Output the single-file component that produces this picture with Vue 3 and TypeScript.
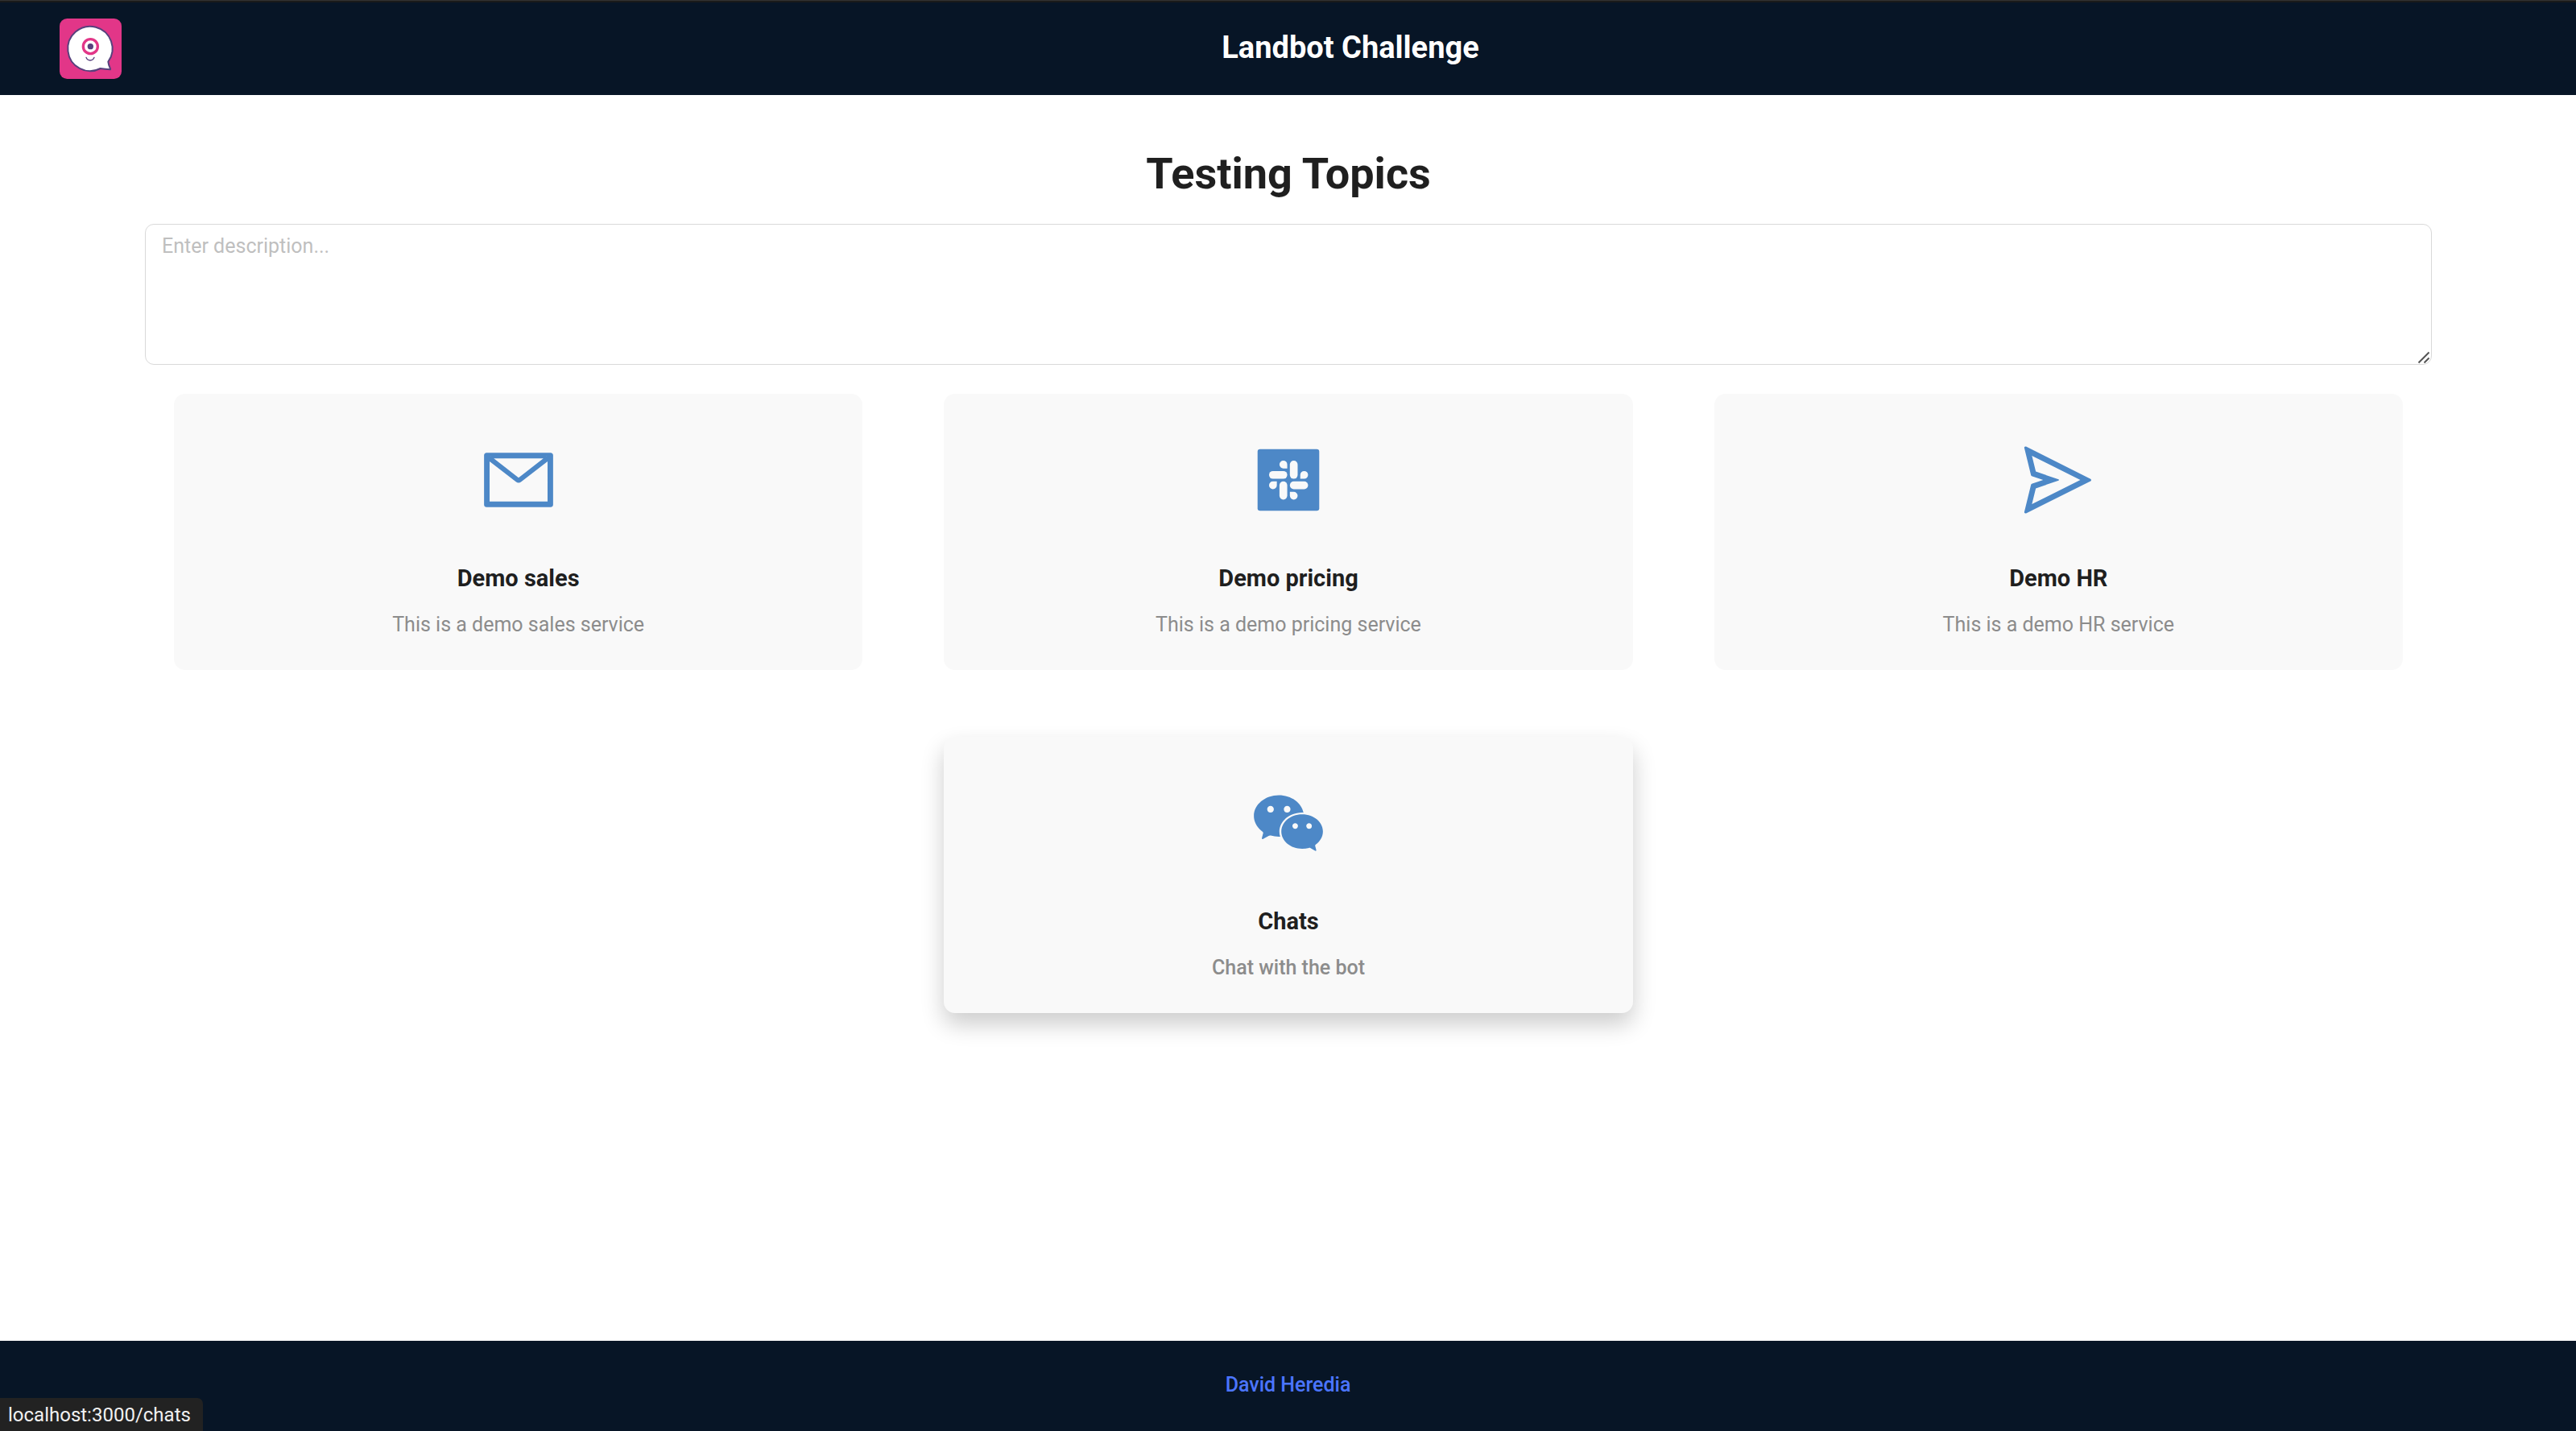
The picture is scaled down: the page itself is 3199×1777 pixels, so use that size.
<script setup lang="ts">
import { ref } from 'vue'

type IconName = 'mail' | 'slack' | 'send' | 'wechat'

interface Topic {
  title: string
  text: string
  icon: IconName
  href: string
  active?: boolean
}

const description = ref('')

const topics: Topic[] = [
  { title: 'Demo sales', text: 'This is a demo sales service', icon: 'mail', href: '#sales' },
  { title: 'Demo pricing', text: 'This is a demo pricing service', icon: 'slack', href: '#pricing' },
  { title: 'Demo HR', text: 'This is a demo HR service', icon: 'send', href: '#hr' },
  { title: 'Chats', text: 'Chat with the bot', icon: 'wechat', href: '#chats', active: true },
]
</script>

<template>
  <div class="page">
    <div class="window-edge"></div>
    <header class="header">
      <svg class="logo" viewBox="0 0 231 225" aria-hidden="true">
        <rect width="231" height="225" rx="28" fill="#e23688" />
        <path
          d="M181 161 A83 83 0 1 0 152 186 Q170 189 188 190 Q190 190 189 187 Q182 172 181 161 Z"
          fill="#fff"
          stroke="#57417d"
          stroke-width="6"
          stroke-linejoin="round"
        />
        <circle cx="115" cy="104" r="27" fill="#fff" stroke="#e23688" stroke-width="10" />
        <circle cx="115" cy="104" r="11" fill="#57417d" />
        <path d="M99 145 Q103 156 114 156 Q125 156 129 145" fill="none" stroke="#57417d" stroke-width="4" stroke-linecap="round" />
      </svg>
      <div class="brand">Landbot Challenge</div>
    </header>

    <main class="main">
      <h1 class="heading">Testing Topics</h1>
      <div class="field">
        <textarea
          v-model="description"
          class="description"
          rows="4"
          placeholder="Enter description..."
          aria-label="Description"
        ></textarea>
        <svg class="grip" viewBox="0 0 16 16" aria-hidden="true">
          <path d="M1.500 14.500L14.500 1.500M8.500 14.500L14.500 8.500" />
        </svg>
      </div>

      <div class="cards">
        <a v-for="topic in topics" :key="topic.title" :href="topic.href" class="card" :class="{ active: topic.active }">
          <svg class="icon" viewBox="0 0 1024 1024" aria-hidden="true">
            <path
              v-if="topic.icon === 'mail'"
              d="M928 160H96c-17.7 0-32 14.3-32 32v640c0 17.7 14.3 32 32 32h832c17.7 0 32-14.3 32-32V192c0-17.7-14.3-32-32-32zm-40 110.8V792H136V270.8l-27.6-21.5 39.3-50.5 42.8 33.3h643.1l42.8-33.3 39.3 50.5-27.7 21.5zM833.6 232L512 482 190.4 232l-42.8-33.3-39.3 50.5 27.6 21.5 341.6 265.6a55.99 55.99 0 0068.7 0L888 270.8l27.6-21.5-39.3-50.5-42.7 33.2z"
            />
            <template v-else-if="topic.icon === 'slack'">
              <rect x="112" y="112" width="800" height="800" rx="32" />
              <g class="cutout">
                <rect x="531" y="261" width="101" height="236" rx="50" />
                <rect x="261" y="396" width="236" height="101" rx="50" />
                <rect x="396" y="531" width="101" height="236" rx="50" />
                <rect x="531" y="531" width="236" height="101" rx="50" />
                <path d="M497 362V311a50.5 50.5 0 1 0-50.500 51z" />
                <path d="M666 497V446a50.500 50.500 0 1 1 50.500 51z" />
                <path d="M531 666H581a50.500 50.500 0 1 1-50 50.500z" />
                <path d="M362 531H311a50.500 50.500 0 1 0 51 50.500z" />
              </g>
            </template>
            <path
              v-else-if="topic.icon === 'send'"
              d="M931.4 498.9L94.9 79.5c-3.4-1.7-7.3-2.1-11-1.2a15.99 15.99 0 00-11.7 19.3l86.2 352.2c1.3 5.3 5.2 9.6 10.4 11.3l147.7 50.7-147.6 50.7c-5.2 1.8-9.1 6-10.3 11.3L72.2 926.5c-.9 3.7-.5 7.6 1.2 10.9 3.9 7.9 13.5 11.1 21.5 7.2l836.5-417c3.1-1.5 5.6-4.1 7.2-7.1 3.9-8 .7-17.6-7.2-21.6zM170.8 826.3l50.3-205.6 295.2-101.3c2.3-.8 4.2-2.6 5-5 1.4-4.2-.8-8.7-5-10.2L221.1 403 171 198.2l628 314.9-628.2 313.2z"
            />
            <path
              v-else
              d="M690.1 377.4c5.9 0 11.8.2 17.6.5-24.4-128.7-158.3-227.1-319.9-227.1C209 150.8 64 271.4 64 420.2c0 81.1 43.6 154.2 111.9 203.6a21.5 21.5 0 019.1 17.6c0 2.4-.5 4.6-1.1 6.9-5.5 20.3-14.2 52.8-14.6 54.3-.7 2.6-1.7 5.2-1.7 7.9 0 5.9 4.8 10.8 10.8 10.8 2.3 0 4.2-.9 6.2-2l70.9-40.9c5.3-3.1 11-5 17.2-5 3.2 0 6.4.5 9.5 1.4 33.1 9.5 68.8 14.8 105.7 14.8 6 0 11.9-.1 17.8-.4-7.1-21-10.9-43.1-10.9-66 0-135.8 132.2-245.8 295.3-245.8zm-194.3-86.5c23.8 0 43.2 19.3 43.2 43.1s-19.3 43.1-43.2 43.1c-23.8 0-43.2-19.3-43.2-43.1s19.4-43.1 43.2-43.1zm-215.9 86.2c-23.8 0-43.2-19.3-43.2-43.1s19.3-43.1 43.2-43.1 43.2 19.3 43.2 43.1-19.4 43.1-43.2 43.1zm586.8 415.6c56.9-41.2 93.2-102 93.2-169.7 0-124-120.8-224.5-269.9-224.5-149 0-269.9 100.5-269.9 224.5S540.9 847.5 690 847.5c30.8 0 60.6-4.4 88.1-12.3 2.6-.8 5.2-1.2 7.9-1.2 5.2 0 9.9 1.6 14.3 4.1l59.1 34c1.7 1 3.3 1.7 5.2 1.7a9 9 0 006.4-2.6 9 9 0 002.6-6.4c0-2.2-.9-4.4-1.4-6.6-.3-1.2-7.6-28.3-12.2-45.3-.5-1.9-.9-3.8-.9-5.7.1-5.9 3.1-11.2 7.6-14.5zM600.2 587.2c-19.9 0-36-16.1-36-35.9 0-19.8 16.1-35.9 36-35.9s36 16.1 36 35.9c0 19.8-16.2 35.9-36 35.9zm179.9 0c-19.9 0-36-16.1-36-35.9 0-19.8 16.1-35.9 36-35.9s36 16.1 36 35.9a36.08 36.08 0 01-36 35.9z"
            />
          </svg>
          <h2 class="card-title">{{ topic.title }}</h2>
          <p class="card-text">{{ topic.text }}</p>
        </a>
      </div>
    </main>

    <footer class="footer">
      <a href="#author" class="author">David Heredia</a>
    </footer>

    <div class="status">localhost:3000/chats</div>
  </div>
</template>

<style>
body {
  margin: 0;
  background: #fff;
}
</style>

<style scoped>
.page {
  display: flex;
  flex-direction: column;
  min-height: 100vh;
  font-family: Roboto, "Liberation Sans", sans-serif;
  font-size: 25px;
  line-height: 40px;
  color: #1f1f1f;
}

.window-edge {
  height: 2px;
  border-top: 1px solid #333;
  background: #1a1a1a;
}

.header {
  display: flex;
  align-items: center;
  height: 115px;
  padding-left: 74px;
  background: #071526;
}

.logo {
  width: 77px;
  height: 75px;
}

.brand {
  flex: 1;
  padding: 0 0 4px 4px;
  text-align: center;
  font-size: 38px;
  line-height: 60px;
  font-weight: 700;
  color: #fff;
}

.main {
  flex: 1;
  display: flex;
  flex-direction: column;
  padding: 64px 179px 64px 180px;
}

.heading {
  margin: 0 0 28px;
  text-align: center;
  font-size: 54px;
  line-height: 68px;
  font-weight: 700;
}

.field {
  position: relative;
  display: flex;
}

.description {
  box-sizing: border-box;
  width: 100%;
  padding: 7px 20px 6px;
  border: 1px solid #d9d9d9;
  border-radius: 11px;
  background: #fff;
  font: inherit;
  color: inherit;
  resize: none;
  outline: none;
}

.description::placeholder {
  color: #bfbfbf;
  opacity: 1;
}

.grip {
  position: absolute;
  right: 2px;
  bottom: 1px;
  width: 16px;
  height: 16px;
  fill: none;
  stroke: #555;
  stroke-width: 2;
  pointer-events: none;
}

.cards {
  display: flex;
  flex-wrap: wrap;
  justify-content: center;
  gap: 83px 101px;
  padding: 36px 36px 0;
}

.card {
  box-sizing: border-box;
  display: flex;
  flex-direction: column;
  align-items: center;
  width: calc((100% - 202px) / 3);
  padding: 58px 36px 36px;
  border-radius: 14px;
  background: #f9f9f9;
  color: inherit;
  text-decoration: none;
}

.card.active {
  box-shadow: 0 14px 29px rgba(0, 0, 0, 0.2);
}

.icon {
  width: 98px;
  height: 98px;
  fill: #4d88c7;
}

.cutout {
  fill: #f9f9f9;
}

.card-title {
  margin: 51px 0 15px;
  font-size: 29px;
  line-height: 45px;
  font-weight: 700;
}

.card-text {
  margin: 0;
  color: #8c8c8c;
}

.active .card-text {
  font-weight: 500;
}

.footer {
  display: flex;
  align-items: center;
  justify-content: center;
  box-sizing: border-box;
  height: 112px;
  padding-bottom: 2px;
  background: #071526;
}

.author {
  font-weight: 500;
  color: #4b75ff;
  text-decoration: none;
}

.status {
  position: fixed;
  left: 0;
  bottom: 0;
  padding: 1px 15px 0 10px;
  border-top-right-radius: 7px;
  background: #222;
  font-size: 24px;
  color: #f1f1f1;
}
</style>
